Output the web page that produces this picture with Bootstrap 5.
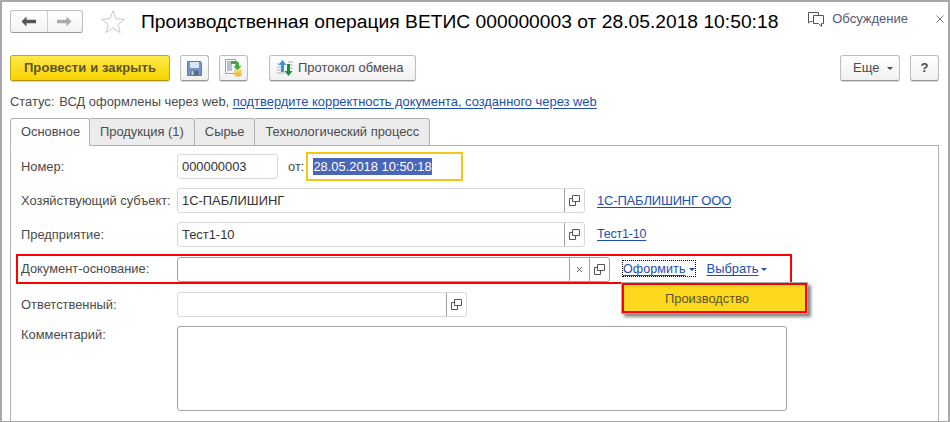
<!DOCTYPE html>
<html lang="ru">
<head>
  <meta charset="UTF-8">
  <title>Производственная операция ВЕТИС</title>
  <meta name="viewport" content="width=device-width, initial-scale=1">
  <link href="https://cdn.jsdelivr.net/npm/bootstrap@5.3.3/dist/css/bootstrap.min.css" rel="stylesheet">
  <style>
    html, body { height: 100%; overflow: hidden; }
    body { font-family: "Liberation Sans", Arial, sans-serif; font-size: 12.9px; color: #4b4b4b; background: #fff; }
    .win-frame { width: 950px; height: 422px; border: 2px solid #a8a8a8; border-bottom-width: 1px; padding: 8px 9px 0 8px; overflow: hidden; position: relative; }

    .head-row { height: 23px; margin-bottom: 22px; }
    .nav-pair { width: 73px; height: 23px; border: 1px solid #bdbdbd; border-bottom-color: #9a9a9a; border-radius: 3px; background: linear-gradient(#fff, #f3f3f3); }
    .nav-pair span { width: 50%; height: 100%; }
    .nav-pair span + span { border-left: 1px solid #cfcfcf; }
    .star-ico { margin: 0 16px 0 18px; }
    .doc-title { font-size: 19.25px; color: #000; white-space: nowrap; line-height: 23px; margin: 0; font-weight: 400; }
    .talk-link { color: #55557a; font-size: 13px; margin-right: 31px; margin-top: -5px; }
    .close-x { position: absolute; right: 4px; top: 13px; }

    .tool-btn { height: 26px; padding: 0; border: 1px solid #bdbdbd; border-bottom-color: #969696; border-radius: 3px; background: linear-gradient(#fff, #f1f1f1); color: #4b4b4b; font-size: 13px; box-shadow: 0 1px 0 #d8d8d8; }
    .btn-post { width: 160px; border-color: #c9a80f; border-bottom-color: #b29200; background: linear-gradient(#ffe84a, #f7d400); color: #5e5322; font-weight: 700; letter-spacing: .1px; }
    .btn-sq { width: 29px; }
    .btn-proto { width: 147px; padding-left: 6px; }
    .btn-more { width: 60px; padding-left: 12px; text-align: left; }
    .tb-gap1 { margin-left: 10px; }
    .tb-gap2 { margin-left: 21px; }

    .status-line { height: 20px; line-height: 20px; margin-top: 11px; white-space: nowrap; }
    .status-lbl { margin-right: 5px; }
    .link-1c { color: #1b4fb0; text-decoration: underline; text-underline-offset: 2px; white-space: nowrap; }
    .caret-1c { display: inline-block; border: 3px solid transparent; border-top: 3px solid currentColor; border-bottom: 0; margin-left: 3px; vertical-align: 2px; }
    .caret-blue { color: #1b4fb0; }
    .link-firm { font-size: 13px; letter-spacing: -.18px; }
    .link-short { font-size: 12.5px; letter-spacing: -.2px; }
    .link-make { font-size: 12.5px; letter-spacing: .1px; }

    .tabs-1c { margin-top: 6px; height: 28px; border-bottom: 0; position: relative; z-index: 1; }
    .tabs-1c .nav-link { height: 28px; padding: 0 10px; line-height: 26px; font-size: 12.9px; color: #4b4b4b; background: #ececec; border: 1px solid #b0b0b0; border-left: 0; border-radius: 0 3px 0 0; margin: 0; }
    .tabs-1c .nav-link.active { background: #fff; color: #4b4b4b; border: 1px solid #b0b0b0; border-bottom-color: #fff; border-radius: 3px 3px 0 0; width: 80px; }
    .tab-body { border: 1px solid #b0b0b0; height: 290px; margin-top: -1px; padding: 8px 0 0 10px; width: 929px; position: relative; }

    .form-row-1c { height: 25px; margin-bottom: 9px; }
    .lbl-1c { width: 156px; flex: none; white-space: nowrap; }
    .fld-1c { height: 25px; display: flex; border: 1px solid #d8d8d8; border-radius: 3px; background: #fff; flex: none; color: #333; }
    .fld-strong { border-color: #a3a3a3; }
    .fld-text { flex: 1; padding-left: 4px; line-height: 23px; }
    .fld-btn { width: 20px; border-left: 1px solid #a3a3a3; display: flex; align-items: center; justify-content: center; flex: none; }
    .of-lbl { margin-left: 10px; }
    .date-box { width: 157px; height: 29px; border: 2px solid #f5c518; margin-left: 2px; padding-left: 5px; color: #fff; line-height: 25px; }
    .date-box span { background: #4a66b8; padding: 1px 0; }
    .red-box { height: 30px; width: 776px; margin: -2px 0 8px -5px; padding-left: 3px; border: 2px solid #f00; }
    .make-wrap { margin-left: 13px; }

    .menu-1c { position: absolute; left: -2px; top: 23px; width: 187px; height: 32px; border: 1px solid #aaa; box-shadow: 3px 3px 3px #888; background: #fff; z-index: 5; }
    .menu-item-1c { height: 30px; border: 2px solid #f00; background: #fcd91e; color: #5e5322; text-align: center; line-height: 27px; padding-right: 15px; }
    .focus-link { outline: 1px dotted #000; outline-offset: 0; }
    .note-area { width: 610px; height: 85px; border-color: #a3a3a3; }
    .comment-lbl { margin-top: -1px; }
  </style>
</head>
<body>
<div class="win-frame">

  <!-- header -->
  <div class="head-row d-flex align-items-center">
    <div class="nav-pair d-flex">
      <span class="d-flex align-items-center justify-content-center">
        <svg width="15" height="11" viewBox="0 0 15 11"><path d="M5.500.5.500 5.500l5 5V7.300H15V3.700H5.500z" fill="#555"/></svg>
      </span>
      <span class="d-flex align-items-center justify-content-center">
        <svg width="15" height="11" viewBox="0 0 15 11"><path d="M9.500.5l5 5-5 5V7.300H0V3.700h9.500z" fill="#aaa"/></svg>
      </span>
    </div>
    <svg class="star-ico" width="24" height="23" viewBox="0 0 24 23"><path d="M12 .8l3.100 8 8.400.5-6.500 5.300 2.200 8L12 18.100l-6.900 4.500 2.200-8L.5 9.300l8.400-.5z" fill="none" stroke="#c8c8c8"/></svg>
    <h1 class="doc-title">Производственная операция ВЕТИС 000000003 от 28.05.2018 10:50:18</h1>
    <div class="talk-link ms-auto d-flex align-items-center gap-2">
      <svg width="16" height="15" viewBox="0 0 16 15"><path d="M4.500 9.500H2.500L.5 11V.5h10v3M5.500 3.500h10v8h-2v3l-3-3h-5z" fill="none" stroke="#555"/></svg>
      <span>Обсуждение</span>
    </div>
    <svg class="close-x" width="8" height="8" viewBox="0 0 8 8"><path d="M.5.5l7 7M7.500.5l-7 7" stroke="#777"/></svg>
  </div>

  <!-- toolbar -->
  <div class="d-flex align-items-center">
    <button class="btn tool-btn btn-post" type="button">Провести и закрыть</button>
    <button class="btn tool-btn btn-sq tb-gap1 d-flex align-items-center justify-content-center" type="button">
      <svg width="15" height="15" viewBox="0 0 15 15"><path d="M.5.5h13l1 1v13H.5z" fill="#7396c6" stroke="#5f7fab"/><rect x="3" y="1" width="9" height="6" fill="#dbe6f4"/><rect x="3.500" y="9.500" width="8" height="5" fill="#5d6c82"/><rect x="4.500" y="10" width="2" height="4" fill="#c9d4e2"/></svg>
    </button>
    <button class="btn tool-btn btn-sq tb-gap1 d-flex align-items-center justify-content-center" type="button">
      <svg width="18" height="18" viewBox="0 0 18 18"><path d="M.5.5h10v14H.5z" fill="#f4f6f8" stroke="#9aa6b2"/><path d="M2 3h7M2 5h5M2 7h5M2 9h5M2 11h5" stroke="#7f8e9c"/><ellipse cx="13" cy="15.500" rx="3.500" ry="2" fill="#e2b93a"/><rect x="9.500" y="11" width="7" height="4.500" fill="#ecc84e"/><ellipse cx="13" cy="11" rx="3.500" ry="1.800" fill="#f5dc7c"/><path d="M6 2h6l2 2v3h2.500L12.500 11 8.500 7H11V5H6z" fill="#46a83c"/></svg>
    </button>
    <button class="btn tool-btn btn-proto tb-gap2 d-flex align-items-center gap-1" type="button">
      <svg width="18" height="18" viewBox="0 0 18 18"><path d="M1 5h4M1 8h4M1 11h4M1 14h8M12 3h5M14 6h3M14 9h3" stroke="#a9b4bf"/><path d="M6.500 1 10.500 6H8v7H5V6H2.500z" fill="#3f8fdc"/><path d="M12.500 17 8.500 12H11V5h3v7h2.500z" fill="#1d8f3c"/></svg>
      <span>Протокол обмена</span>
    </button>
    <button class="btn tool-btn btn-more ms-auto" type="button">Еще<span class="caret-1c ms-2"></span></button>
    <button class="btn tool-btn btn-sq tb-gap1 fw-bold" type="button">?</button>
  </div>

  <!-- status -->
  <div class="status-line"><span class="status-lbl">Статус:</span>ВСД оформлены через web, <a class="link-1c" href="#">подтвердите корректность документа, созданного через web</a></div>

  <!-- tabs -->
  <ul class="nav nav-tabs tabs-1c">
    <li class="nav-item"><a class="nav-link active" href="#">Основное</a></li>
    <li class="nav-item"><a class="nav-link" href="#">Продукция (1)</a></li>
    <li class="nav-item"><a class="nav-link" href="#">Сырье</a></li>
    <li class="nav-item"><a class="nav-link" href="#">Технологический процесс</a></li>
  </ul>

  <div class="tab-body">
    <div class="form-row-1c d-flex align-items-center">
      <div class="lbl-1c">Номер:</div>
      <div class="fld-1c" style="width:101px"><div class="fld-text">000000003</div></div>
      <div class="of-lbl">от:</div>
      <div class="date-box"><span>28.05.2018 10:50:18</span></div>
    </div>

    <div class="form-row-1c d-flex align-items-center">
      <div class="lbl-1c">Хозяйствующий субъект:</div>
      <div class="fld-1c" style="width:408px">
        <div class="fld-text">1С-ПАБЛИШИНГ</div>
        <div class="fld-btn"><svg width="11" height="11" viewBox="0 0 11 11"><path d="M3.500.5h7v6h-7zM3.500 3.500H.5v7h6V7" fill="none" stroke="#555"/></svg></div>
      </div>
      <a class="link-1c link-firm ms-2 ps-1" href="#">1С-ПАБЛИШИНГ ООО</a>
    </div>

    <div class="form-row-1c d-flex align-items-center">
      <div class="lbl-1c">Предприятие:</div>
      <div class="fld-1c" style="width:408px">
        <div class="fld-text">Тест1-10</div>
        <div class="fld-btn"><svg width="11" height="11" viewBox="0 0 11 11"><path d="M3.500.5h7v6h-7zM3.500 3.500H.5v7h6V7" fill="none" stroke="#555"/></svg></div>
      </div>
      <a class="link-1c link-short ms-2 ps-1" href="#">Тест1-10</a>
    </div>

    <div class="red-box d-flex align-items-center">
      <div class="lbl-1c">Документ-основание:</div>
      <div class="fld-1c fld-strong" style="width:433px">
        <div class="fld-text"></div>
        <div class="fld-btn"><svg width="7" height="7" viewBox="0 0 7 7"><path d="M1 1l5 5M6 1 1 6" stroke="#666"/></svg></div>
        <div class="fld-btn"><svg width="11" height="11" viewBox="0 0 11 11"><path d="M3.500.5h7v6h-7zM3.500 3.500H.5v7h6V7" fill="none" stroke="#555"/></svg></div>
      </div>
      <div class="position-relative make-wrap">
        <span class="focus-link"><a class="link-1c link-make" href="#">Оформить</a><span class="caret-1c caret-blue"></span></span>
        <div class="menu-1c"><div class="menu-item-1c">Производство</div></div>
      </div>
      <div class="ms-2 ps-1">
        <a class="link-1c" href="#">Выбрать</a><span class="caret-1c caret-blue"></span>
      </div>
    </div>

    <div class="form-row-1c d-flex align-items-center">
      <div class="lbl-1c">Ответственный:</div>
      <div class="fld-1c" style="width:290px">
        <div class="fld-text"></div>
        <div class="fld-btn"><svg width="11" height="11" viewBox="0 0 11 11"><path d="M3.500.5h7v6h-7zM3.500 3.500H.5v7h6V7" fill="none" stroke="#555"/></svg></div>
      </div>
    </div>

    <div class="d-flex">
      <div class="lbl-1c comment-lbl">Комментарий:</div>
      <div class="fld-1c note-area"></div>
    </div>
  </div>
</div>
</body>
</html>
